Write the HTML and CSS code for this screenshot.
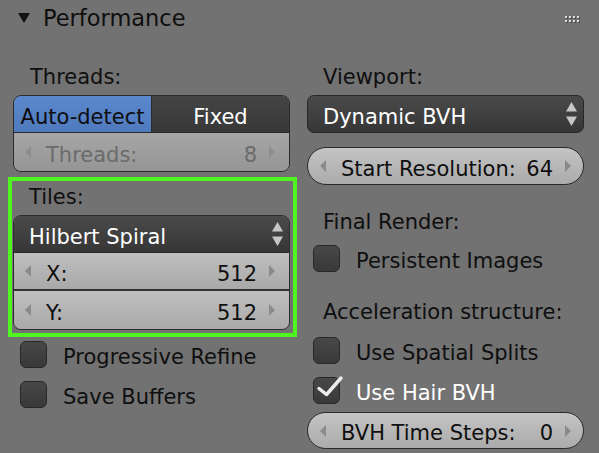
FILE: index.html
```html
<!DOCTYPE html>
<html>
<head>
<meta charset="utf-8">
<link rel="stylesheet" href="styles.css">
</head>
<body>
<div class="panel">
  <div class="header">
    <span class="tri"></span>
    <span class="title">Performance</span>
    <span class="grip"><i></i><i></i><i></i><i></i><i></i><i></i><i></i><i></i></span>
  </div>
  <div class="cols">
    <div class="col">
      <div class="label">Threads:</div>
      <div class="group">
        <div class="seg">
          <div class="segbtn active"><span class="txt">Auto-detect</span></div>
          <div class="segbtn"><span class="txt">Fixed</span></div>
        </div>
        <div class="num row disabled">
          <span class="arr al"></span><span class="nlabel">Threads:</span><span class="nval">8</span><span class="arr ar"></span>
        </div>
      </div>
      <div class="highlight">
        <div class="label">Tiles:</div>
        <div class="group">
          <div class="menu inset">
            <span class="txt">Hilbert Spiral</span>
            <svg class="updown" width="11" height="25" viewBox="0 0 11 25"><polygon points="5.5,0 11,9.5 0,9.5"/><polygon points="0,14.5 11,14.5 5.5,24"/></svg>
          </div>
          <div class="num row sep">
            <span class="arr al"></span><span class="nlabel">X:</span><span class="nval">512</span><span class="arr ar"></span>
          </div>
          <div class="num row">
            <span class="arr al"></span><span class="nlabel">Y:</span><span class="nval">512</span><span class="arr ar"></span>
          </div>
        </div>
      </div>
      <div class="checks">
        <div class="check"><span class="box"></span><span class="txt">Progressive Refine</span></div>
        <div class="check"><span class="box"></span><span class="txt">Save Buffers</span></div>
      </div>
    </div>
    <div class="col right">
      <div class="label">Viewport:</div>
      <div class="menu solo">
        <span class="txt">Dynamic BVH</span>
        <svg class="updown" width="11" height="25" viewBox="0 0 11 25"><polygon points="5.5,0 11,9.5 0,9.5"/><polygon points="0,14.5 11,14.5 5.5,24"/></svg>
      </div>
      <div class="num pill p1">
        <span class="arr al"></span><span class="nlabel">Start Resolution:</span><span class="nval">64</span><span class="arr ar"></span>
      </div>
      <div class="label l2">Final Render:</div>
      <div class="check c1"><span class="box"></span><span class="txt">Persistent Images</span></div>
      <div class="label l2">Acceleration structure:</div>
      <div class="check c2"><span class="box"></span><span class="txt">Use Spatial Splits</span></div>
      <div class="check c3 on"><span class="box"><svg class="tick" width="30" height="20" viewBox="0 0 30 20"><polyline points="6,11.5 13.5,17.5 28,1"/></svg></span><span class="txt">Use Hair BVH</span></div>
      <div class="num pill p2">
        <span class="arr al"></span><span class="nlabel">BVH Time Steps:</span><span class="nval">0</span><span class="arr ar"></span>
      </div>
    </div>
  </div>
</div>
</body>
</html>
```

FILE: styles.css
```css
html, body {
  margin: 0;
  padding: 0;
}
body {
  background: #727272;
  font-family: "DejaVu Sans", sans-serif;
  font-size: 21px;
  color: #0f0f0f;
  width: 599px;
  height: 453px;
  overflow: hidden;
}
.panel {
  display: flex;
  flex-direction: column;
}
.header {
  display: flex;
  align-items: center;
  height: 35px;
  padding: 0 20px 0 18px;
}
.tri {
  width: 0;
  height: 0;
  border-left: 6px solid transparent;
  border-right: 6px solid transparent;
  border-top: 10px solid #111;
  margin-right: 13px;
  margin-top: 1px;
}
.title {
  font-size: 22.5px;
  line-height: 35px;
  padding-top: 1px;
}
.grip {
  margin-left: auto;
  margin-top: 3px;
  display: grid;
  grid-template-columns: repeat(4, 2px);
  grid-auto-rows: 2px;
  column-gap: 2px;
  row-gap: 2px;
}
.grip i {
  display: block;
  width: 2px;
  height: 2px;
  background: #dcdcdc;
  box-shadow: 1px 1px 0 #4a4a4a;
}
.cols {
  display: flex;
  gap: 17px;
  padding: 26px 0 0 13px;
}
.col {
  width: 277px;
  display: flex;
  flex-direction: column;
}
.label {
  height: 30px;
  line-height: 33px;
  padding-left: 17px;
}
.right .label {
  padding-left: 16px;
}
.highlight .label {
  padding-left: 16px;
}
.txt,
.nlabel,
.nval {
  padding-top: 5px;
}
.group {
  margin-top: 4px;
  border: 1px solid #2b2b2b;
  border-radius: 8px;
  overflow: hidden;
  display: flex;
  flex-direction: column;
}
.seg {
  display: flex;
  height: 36px;
  border-bottom: 1px solid #2b2b2b;
}
.segbtn {
  flex: 1;
  display: flex;
  align-items: center;
  justify-content: center;
  background: linear-gradient(#444444, #383838);
  color: #ffffff;
}
.segbtn.active {
  flex: 0 0 137px;
  background: linear-gradient(#5b88cd, #4f7abd);
  color: #0d0d0d;
  border-right: 1px solid #2b2b2b;
}
.num {
  display: flex;
  align-items: center;
  box-sizing: border-box;
}
.row {
  height: 38px;
  padding: 0 14px 0 11px;
  background: linear-gradient(#bfbfbf, #a9a9a9);
}
.row.sep {
  border-bottom: 2px solid #333333;
}
.row.disabled {
  background: linear-gradient(#a6a6a6, #959595);
  color: #6b6b6b;
}
.row.disabled .al {
  border-right-color: #8d8d8d;
}
.row.disabled .ar {
  border-left-color: #8d8d8d;
}
.arr {
  width: 0;
  height: 0;
  border-top: 6px solid transparent;
  border-bottom: 6px solid transparent;
}
.al {
  border-right: 6px solid #8a8a8a;
}
.ar {
  border-left: 6px solid #8a8a8a;
}
.nlabel {
  margin-left: 15px;
}
.nval {
  margin-left: auto;
  margin-right: 12px;
}
.highlight {
  margin: 5px -7px 0 -5px;
  border: 4px solid #4ff71f;
  padding: 0 3px 3px 1px;
}
.menu {
  display: flex;
  align-items: center;
  justify-content: space-between;
  box-sizing: border-box;
  background: linear-gradient(#4a4a4a, #363636);
  color: #ffffff;
}
.menu.inset {
  height: 37px;
  padding: 0 6px 0 15px;
  border-bottom: 1px solid #2b2b2b;
}
.menu.solo {
  margin-top: 4px;
  height: 38px;
  border: 1px solid #272727;
  border-radius: 7px;
  padding: 0 6px 0 15px;
}
.updown {
  fill: #c6c6c6;
  display: block;
}
.pill {
  height: 38px;
  border: 1px solid #2a2a2a;
  border-radius: 19px;
  background: linear-gradient(#c4c4c4, #ababab);
  padding: 0 12px 0 12px;
}
.pill.p1 {
  margin-top: 14px;
}
.pill.p2 {
  margin-top: 5px;
  height: 37px;
}
.pill .nlabel {
  margin-left: 15px;
}
.pill .nval {
  margin-right: 12px;
}
.checks {
  display: flex;
  flex-direction: column;
  gap: 6px;
}
.check {
  display: flex;
  align-items: center;
  height: 34px;
  padding-left: 7px;
}
.right .check {
  padding-left: 6px;
}
.box {
  position: relative;
  width: 27px;
  height: 27px;
  box-sizing: border-box;
  border: 1px solid #272727;
  border-radius: 6px;
  background: linear-gradient(#484848, #393939);
  margin-right: 16px;
  flex: 0 0 auto;
}
.l2 {
  margin-top: 21px;
}
.check.c1 {
  margin-top: 5px;
}
.check.c2 {
  margin-top: 7px;
}
.check.c3 {
  margin-top: 6px;
}
.check.on {
  color: #ffffff;
}
.tick {
  position: absolute;
  left: -1px;
  top: -1px;
  overflow: visible;
  fill: none;
  stroke: #ececec;
  stroke-width: 3.5;
  stroke-linecap: round;
  stroke-linejoin: round;
}
```
